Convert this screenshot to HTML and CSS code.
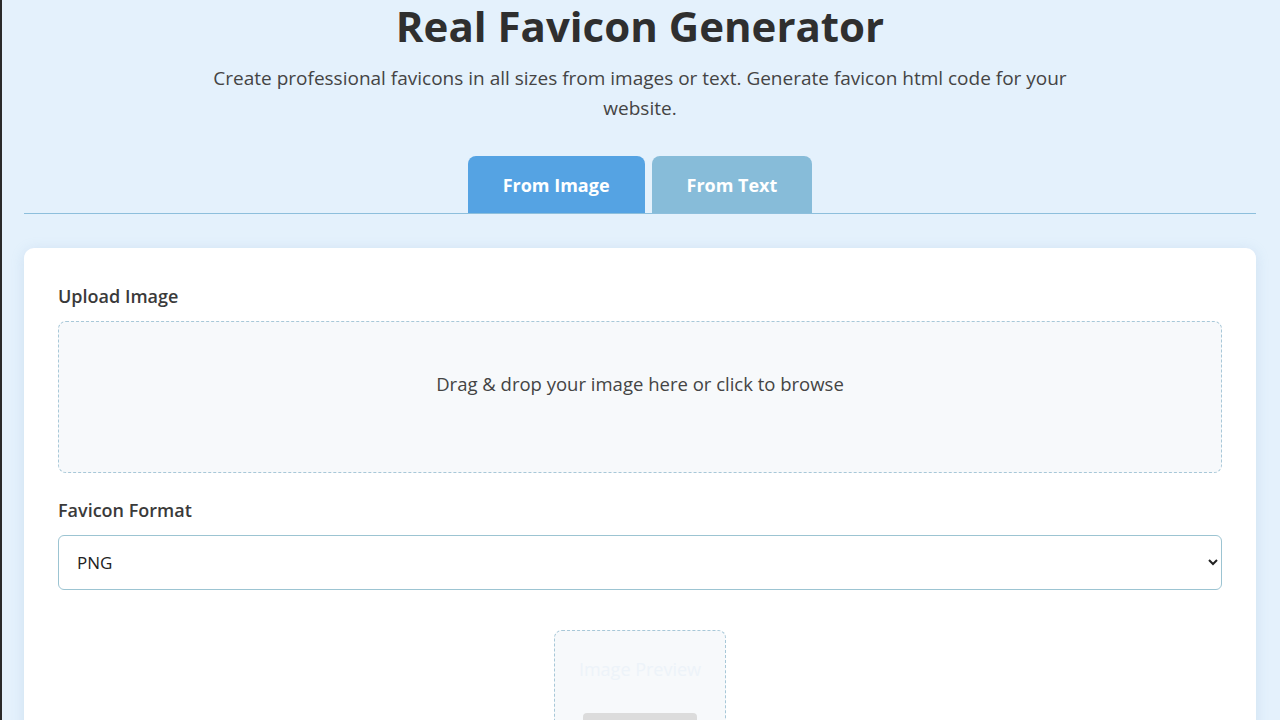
FILE: index.html
```html
<!DOCTYPE html>
<html>
<head>
  <meta name="viewport" content="width=device-width, initial-scale=1.0">
  <title>Real Favicon Generator</title>
  <link rel="stylesheet" href="styles.css">
</head>
<body>
  <div class="page">
    <header class="header">
      <h1>Real Favicon Generator</h1>
      <p class="subtitle">Create professional favicons in all sizes from images or text. Generate favicon html code for your website.</p>
    </header>

    <div class="tabs">
      <button class="tab active">From Image</button>
      <button class="tab">From Text</button>
    </div>

    <div class="card">
      <div class="field">
        <label class="label">Upload Image</label>
        <div class="dropzone">Drag &amp; drop your image here or click to browse</div>
      </div>

      <div class="field">
        <label class="label" for="format">Favicon Format</label>
        <select id="format" class="select">
          <option>PNG</option>
          <option>ICO</option>
          <option>SVG</option>
        </select>
      </div>

      <div class="preview">
        <div class="preview-text">Image Preview</div>
        <div class="preview-img"></div>
      </div>
    </div>
  </div>
</body>
</html>
```

FILE: styles.css
```css
html, body {
  margin: 0;
  padding: 0;
  height: 100%;
  overflow: hidden;
}
body {
  background: #e4f1fc;
  font-family: "Open Sans", "Noto Sans", Arial, sans-serif;
  color: #333;
  border-left: 2px solid #2a2a2a;
  box-sizing: border-box;
}
.page {
  padding: 0 24px 0 22px;
}
.header {
  text-align: center;
}
.header h1 {
  margin: 0;
  padding: 2px 0;
  font-size: 42px;
  line-height: 48px;
  font-weight: 700;
  color: #2f2f2f;
}
.subtitle {
  max-width: 880px;
  margin: 11px auto 0;
  font-size: 19px;
  line-height: 30px;
  color: #444;
}
.tabs {
  display: flex;
  justify-content: center;
  gap: 7px;
  margin-top: 33px;
  border-bottom: 1px solid #8dbfdc;
}
.tab {
  border: none;
  border-radius: 8px 8px 0 0;
  height: 57px;
  padding: 0 35px;
  font-family: inherit;
  font-size: 18px;
  font-weight: 700;
  color: #fff;
  background: #87bcd9;
}
.tab.active {
  background: #55a3e3;
}
.card {
  margin-top: 34px;
  background: #fff;
  border-radius: 10px;
  box-shadow: 0 2px 14px rgba(120, 160, 200, 0.2);
  padding: 36px 34px 40px;
}
.field {
  margin-bottom: 25px;
}
.label {
  display: block;
  font-size: 18px;
  font-weight: 600;
  color: #3a3a3a;
  margin-bottom: 13px;
}
.dropzone {
  height: 152px;
  border: 1px dashed #a8c8d8;
  border-radius: 8px;
  background: #f7f9fb;
  display: flex;
  align-items: center;
  justify-content: center;
  font-size: 18.5px;
  color: #444;
  padding-bottom: 28px;
  box-sizing: border-box;
}
.select {
  width: 100%;
  height: 55px;
  border: 1px solid #9cc4d2;
  border-radius: 6px;
  background: #fff;
  padding: 0 14px;
  font-family: inherit;
  font-size: 17px;
  color: #222;
}
.preview {
  width: 172px;
  margin: 40px auto 0;
  border: 1px dashed #a8c8d8;
  border-radius: 8px;
  background: #f7f9fb;
  padding: 26px 0 20px;
  box-sizing: border-box;
  display: flex;
  flex-direction: column;
  align-items: center;
  gap: 32px;
}
.preview-text {
  font-size: 18px;
  color: #edf3f9;
}
.preview-img {
  width: 114px;
  height: 60px;
  border-radius: 4px;
  background: #dcdcdc;
}
```
